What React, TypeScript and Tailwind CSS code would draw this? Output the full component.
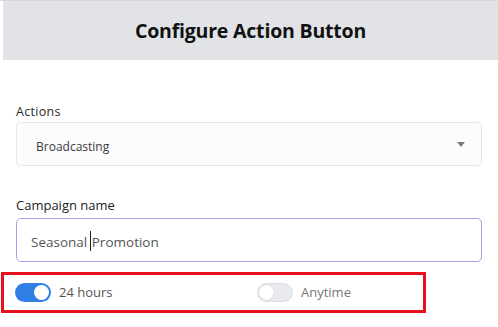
import { useState } from "react";

function Toggle({ on }: { on: boolean }) {
  return (
    <span
      className={
        on
          ? "relative inline-flex h-[19px] w-[36px] shrink-0 items-center rounded-full bg-[#2f7fe6]"
          : "relative inline-flex h-[19px] w-[36px] shrink-0 items-center rounded-full border border-[#dcdfe4] bg-[#e8eaed]"
      }
    >
      <span
        className={
          on
            ? "absolute right-[2px] h-[15px] w-[15px] rounded-full bg-white"
            : "absolute left-[1px] h-[15px] w-[15px] rounded-full bg-white shadow-[0_0_1px_rgba(0,0,0,0.25)]"
        }
      />
    </span>
  );
}

export default function App() {
  const [name] = useState("Seasonal Promotion");

  return (
    <div className="h-[327px] w-[498px] overflow-hidden bg-white font-['Open_Sans',sans-serif] border-t border-[#d6d8dc]">
      <header className="ml-[3px] flex h-[59px] items-center justify-center bg-[#e1e3e7]">
        <h1 className="text-[19.5px] font-bold tracking-[-0.2px] text-[#111]">Configure Action Button</h1>
      </header>

      <div className="px-4 pt-[43px]">
        <label className="block text-[12.5px] leading-[18px] tracking-[0.3px] text-[#2b2b2b]">Actions</label>
        <div className="mt-px flex h-[44px] w-[466px] items-center justify-between rounded-[4px] border border-[#e6e7ec] bg-[#fcfcfe] pl-[19px] pr-[16px]">
          <span className="pt-[5px] text-[12px] text-[#3a3a3a]">Broadcasting</span>
          <svg width="8" height="5" viewBox="0 0 8 5">
            <path d="M0 0h8L4 5z" fill="#7a7a7a" />
          </svg>
        </div>

        <label className="mt-[30px] block text-[13px] leading-[18px] text-[#222]">Campaign name</label>
        <div className="mt-[4px] flex h-[44px] w-[466px] items-center rounded-[5px] border border-[#a99fe6] bg-white pl-[14px]">
          <span className="text-[13.5px] text-[#555]">
            Seasonal <span className="-ml-[1px] mr-[1px] inline-block h-[20px] w-px translate-y-[4px] bg-[#222]" />
            {name.split(" ")[1]}
          </span>
        </div>
      </div>

      <div className="ml-px mt-[10px] flex h-[41px] w-[425px] items-center border-[3px] border-[#e8101f] pl-[11px]">
        <div className="flex w-[242px] items-center gap-2">
          <Toggle on />
          <span className="text-[13px] text-[#555]">24 hours</span>
        </div>
        <div className="flex items-center gap-2">
          <Toggle on={false} />
          <span className="text-[13px] text-[#777]">Anytime</span>
        </div>
      </div>
    </div>
  );
}
